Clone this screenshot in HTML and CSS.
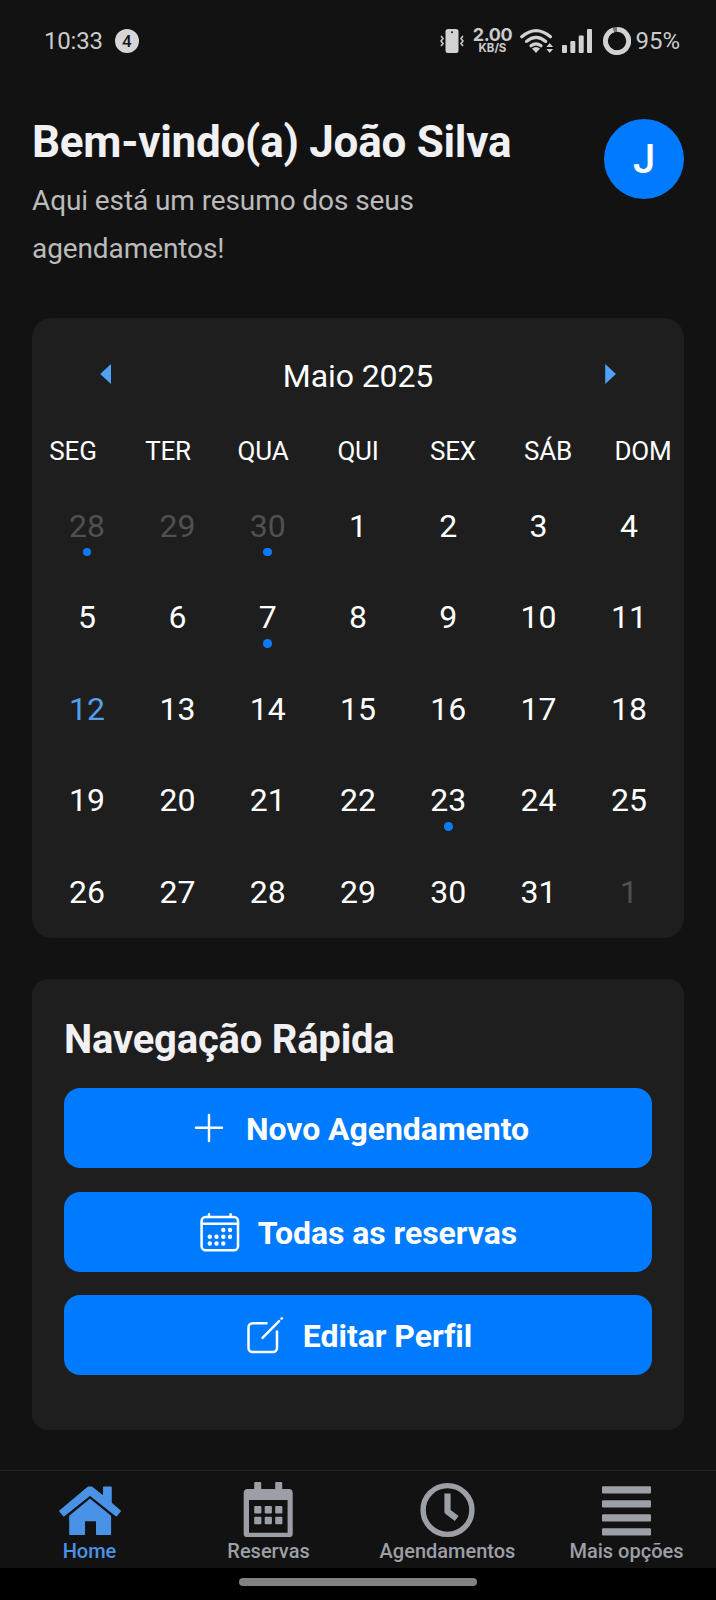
FILE: index.html
```html
<!DOCTYPE html>
<html lang="pt-BR">
<head>
<meta charset="utf-8">
<title>Agendamentos</title>
<link rel="stylesheet" href="styles.css">
</head>
<body>
<div class="status">
  <span class="clock">10:33</span>
  <span class="count">4</span>
  <div class="indicators">
    <svg class="vibrate" width="24" height="26" viewBox="0 0 24 26">
      <rect x="5.500" y="1" width="13" height="24" rx="2.500" fill="#d2d2d2"/>
      <circle cx="12" cy="4.200" r="1" fill="#121212"/>
      <path d="M1 8l2 2.500-2 2.500 2 2.500-2 2.500M23 8l-2 2.500 2 2.500-2 2.500 2 2.500" fill="none" stroke="#c4c4c4" stroke-width="1.700"/>
    </svg>
    <div class="speed"><span class="rate">2.00</span><span class="unit">KB/S</span></div>
    <svg class="wifi" width="34" height="26" viewBox="0 0 34 26">
      <g fill="none" stroke="#d2d2d2" stroke-width="3.200" stroke-linecap="round">
        <path d="M1.800 8.800Q16 -3.500 30.400 8.800"/>
        <path d="M6.500 13.400Q16 5.300 25.700 13.400"/>
        <path d="M11 17.800Q16 13.800 21 17.800"/>
      </g>
      <path d="M12 20.500Q16 17.500 20 20.500L16 25z" fill="#d2d2d2"/>
      <path d="M29.700 15l3.300 4h-6.600zM29.700 25l3.300-4h-6.600z" fill="#d2d2d2"/>
    </svg>
    <svg class="signal" width="30" height="26" viewBox="0 0 30 26" fill="#d2d2d2">
      <rect x="0" y="17" width="5" height="8" rx="1"/>
      <rect x="8.300" y="13" width="5" height="12" rx="1"/>
      <rect x="16.700" y="7.500" width="5" height="17.500" rx="1"/>
      <rect x="25" y="1" width="5" height="24" rx="1"/>
    </svg>
    <svg class="battery" width="28" height="28" viewBox="0 0 28 28" fill="none" stroke-width="4.800">
      <circle cx="14" cy="14" r="11.600" stroke="#777"/>
      <path d="M14 2.400A11.600 11.600 0 1 1 10.400 3" stroke="#d2d2d2"/>
    </svg>
    <span class="percent">95%</span>
  </div>
</div>

<header class="header">
  <div class="greeting">
    <h1>Bem-vindo(a) João Silva</h1>
    <p>Aqui está um resumo dos seus agendamentos!</p>
  </div>
  <div class="avatar">J</div>
</header>

<section class="card calendar">
  <div class="month">
    <svg width="12" height="20" viewBox="0 0 12 20"><path d="M11 0v20L.2 10z" fill="#4fa3f7"/></svg>
    <h2>Maio 2025</h2>
    <svg width="12" height="20" viewBox="0 0 12 20"><path d="M1.200 0v20L12 10z" fill="#4fa3f7"/></svg>
  </div>
  <div class="weekdays"><span>SEG</span><span>TER</span><span>QUA</span><span>QUI</span><span>SEX</span><span>SÁB</span><span>DOM</span></div>
  <div class="days">
    <span class="out mark">28</span><span class="out">29</span><span class="out mark">30</span><span>1</span><span>2</span><span>3</span><span>4</span>
    <span>5</span><span>6</span><span class="mark">7</span><span>8</span><span>9</span><span>10</span><span>11</span>
    <span class="today">12</span><span>13</span><span>14</span><span>15</span><span>16</span><span>17</span><span>18</span>
    <span>19</span><span>20</span><span>21</span><span>22</span><span class="mark">23</span><span>24</span><span>25</span>
    <span>26</span><span>27</span><span>28</span><span>29</span><span>30</span><span>31</span><span class="out">1</span>
  </div>
</section>

<section class="card quick">
  <h2>Navegação Rápida</h2>
  <div class="actions">
    <a class="action">
      <svg width="44" height="44" viewBox="0 0 44 44"><path d="M22 9v26M9 21.800h26" stroke="#fff" stroke-width="2.400" stroke-linecap="round"/></svg>
      <span>Novo Agendamento</span>
    </a>
    <a class="action">
      <svg width="44" height="44" viewBox="0.700 0 44 44">
        <g fill="none" stroke="#fff" stroke-width="2.500" stroke-linecap="round">
          <rect x="3.300" y="7" width="36.400" height="33.200" rx="4"/>
          <path d="M3.300 13.700h36.400M10.700 4.200V6.700M32.300 4.200V6.700"/>
        </g>
        <g fill="#fff">
          <circle cx="25" cy="20" r="2.200"/><circle cx="31.700" cy="20" r="2.200"/>
          <circle cx="11.500" cy="26.800" r="2.200"/><circle cx="18.200" cy="26.800" r="2.200"/><circle cx="25" cy="26.800" r="2.200"/><circle cx="31.700" cy="26.800" r="2.200"/>
          <circle cx="11.500" cy="33.500" r="2.200"/><circle cx="18.200" cy="33.500" r="2.200"/><circle cx="25" cy="33.500" r="2.200"/>
        </g>
      </svg>
      <span>Todas as reservas</span>
    </a>
    <a class="action">
      <svg width="44" height="44" viewBox="0 0 44 44" fill="none" stroke="#fff" stroke-width="2.500" stroke-linecap="round">
        <path d="M22.500 10.300H8.500a4 4 0 0 0-4 4V35a4 4 0 0 0 4 4H29a4 4 0 0 0 4-4V18.500"/>
        <path d="M18.500 24.800L35.100 8.100M37.500 5.700l.4-.4"/>
      </svg>
      <span>Editar Perfil</span>
    </a>
  </div>
</section>

<nav class="tabs">
  <a class="tab active">
    <svg width="64" height="56" viewBox="0 0 64 56" fill="currentColor" stroke="currentColor" stroke-width="1.600" stroke-linejoin="round">
      <path d="M30.500 5.200h3L45.800 15V5.200h7.200V21.200L62.200 29l-4 4.700L32 12.800 5.900 33.700l-4-4.700z"/>
      <path d="M32 17.500L52.300 34v18.200H38.800V38.500H26.200v13.700H12V34z"/>
    </svg>
    <span>Home</span>
  </a>
  <a class="tab">
    <svg width="64" height="56" viewBox="0.800 0 64 56" fill="currentColor">
      <path fill-rule="evenodd" d="M11.500 7H18V1q0-1 1-1h5q1 0 1 1v6h14V1q0-1 1-1h5q1 0 1 1v6h6.500q4 0 4 4v41q0 3-3 3h-43q-3 0-3-3V11q0-4 4-4zM12.800 18v32.700h38.600V18z"/>
      <rect x="18" y="24" width="7.200" height="7.500" rx="1"/><rect x="28.500" y="24" width="7.200" height="7.500" rx="1"/><rect x="39" y="24" width="7.200" height="7.500" rx="1"/>
      <rect x="18" y="34.800" width="7.200" height="7.500" rx="1"/><rect x="28.500" y="34.800" width="7.200" height="7.500" rx="1"/><rect x="39" y="34.800" width="7.200" height="7.500" rx="1"/>
    </svg>
    <span>Reservas</span>
  </a>
  <a class="tab">
    <svg width="64" height="56" viewBox="0.500 0 64 56" fill="none" stroke="currentColor">
      <circle cx="32" cy="28" r="24.400" stroke-width="5.400"/>
      <path d="M32 11.500v18l9.200 7" stroke-width="6.200" stroke-linejoin="round"/>
    </svg>
    <span>Agendamentos</span>
  </a>
  <a class="tab">
    <svg width="64" height="56" viewBox="0.500 0 64 56" fill="currentColor">
      <rect x="7.500" y="4.300" width="49" height="7.200" rx="1.200"/><rect x="7.500" y="18.200" width="49" height="7.200" rx="1.200"/><rect x="7.500" y="32.200" width="49" height="7.200" rx="1.200"/><rect x="7.500" y="46.200" width="49" height="7.200" rx="1.200"/>
    </svg>
    <span>Mais opções</span>
  </a>
</nav>
<div class="gesture"><div class="pill"></div></div>
</body>
</html>
```

FILE: styles.css
```css
* { box-sizing: border-box; }

body {
  margin: 0;
  width: 716px;
  height: 1600px;
  overflow: hidden;
  display: flex;
  flex-direction: column;
  background: #121212;
  color: #fff;
  font-family: Roboto, "Liberation Sans", sans-serif;
}

h1, h2, p { margin: 0; }
svg { display: block; flex: none; }

/* Status bar */
.status {
  height: 82px;
  flex: none;
  display: flex;
  align-items: center;
  padding: 0 36px 0 44px;
  color: #cacaca;
  font-size: 24px;
}
.clock { letter-spacing: -0.2px; }
.count {
  width: 24px;
  height: 24px;
  margin-left: 12px;
  border-radius: 50%;
  background: #d6d6d6;
  color: #161616;
  font-size: 17px;
  font-weight: 500;
  line-height: 24px;
  text-align: center;
}
.indicators { display: flex; align-items: center; margin-left: auto; }
.speed {
  width: 38px;
  margin-left: 9px;
  padding-top: 1px;
  display: flex;
  flex-direction: column;
  align-items: center;
  font-family: Inter, sans-serif;
  font-weight: 700;
}
.rate { font-size: 18px; line-height: 14px; letter-spacing: -0.4px; }
.unit { font-size: 11.5px; line-height: 13px; }
.wifi { margin-left: 9px; }
.signal { margin-left: 8px; }
.battery { margin-left: 11px; }
.percent { margin-left: 4px; }

/* Greeting */
.header {
  height: 202px;
  flex: none;
  margin: 34px 32px 0;
  display: flex;
  justify-content: space-between;
}
.greeting { width: 500px; }
.greeting h1 {
  color: #f1f1f3;
  font-size: 44px;
  font-weight: 700;
  line-height: 52px;
  letter-spacing: -0.27px;
  white-space: nowrap;
}
.greeting p {
  width: 440px;
  margin-top: 9px;
  color: #bbb;
  font-size: 28px;
  line-height: 48px;
  letter-spacing: -0.1px;
}
.avatar {
  width: 80px;
  height: 80px;
  margin-top: 3px;
  border-radius: 50%;
  background: #007bff;
  font-size: 40px;
  font-weight: 500;
  line-height: 81px;
  text-align: center;
}

/* Cards */
.card {
  flex: none;
  margin: 0 32px;
  background: #1e1e1e;
}
.calendar {
  height: 620px;
  padding-top: 38px;
  border-radius: 20px;
}
.month {
  height: 40px;
  padding: 0 68px;
  display: flex;
  align-items: center;
  justify-content: space-between;
}
.month svg { margin-bottom: 4px; }
.month h2 { font-size: 32px; font-weight: 400; line-height: 40px; letter-spacing: -0.1px; }
.weekdays {
  display: grid;
  grid-template-columns: repeat(7, 95px);
  justify-content: center;
  margin-top: 39px;
  font-size: 26px;
  line-height: 32px;
  letter-spacing: -0.2px;
  text-align: center;
}
.days {
  display: grid;
  grid-template-columns: repeat(7, 90.3px);
  grid-auto-rows: 91.5px;
  justify-content: center;
  margin-top: 13.5px;
  font-size: 32px;
  line-height: 91px;
  text-align: center;
}
.days .out { color: #505050; }
.days .today { color: #559fec; }
.mark { position: relative; }
.mark::after {
  content: "";
  position: absolute;
  top: 67px;
  left: 50%;
  width: 8.5px;
  height: 8.5px;
  margin-left: -4.25px;
  border-radius: 50%;
  background: #0d7af5;
}

.quick {
  height: 451px;
  margin-top: 41px;
  padding: 36px 32px 0;
  border-radius: 16px;
}
.quick h2 {
  color: #f1f1f3;
  font-size: 40px;
  font-weight: 700;
  line-height: 49px;
  letter-spacing: -0.22px;
}
.actions {
  display: flex;
  flex-direction: column;
  gap: 23.5px;
  margin-top: 24px;
}
.action {
  height: 80px;
  display: flex;
  align-items: center;
  justify-content: center;
  gap: 15px;
  border-radius: 16px;
  background: #007bff;
  font-size: 32px;
  font-weight: 700;
}
.action span { padding-top: 2px; letter-spacing: -0.05px; }

/* Bottom navigation */
.tabs {
  height: 98px;
  flex: none;
  margin-top: 40px;
  padding-top: 11px;
  display: grid;
  grid-template-columns: repeat(4, 1fr);
  border-top: 1px solid #222;
}
.tab {
  display: flex;
  flex-direction: column;
  align-items: center;
  color: #9ca0a6;
  font-size: 20px;
  font-weight: 500;
  line-height: 26px;
}
.tab.active { color: #4a92e6; }

.gesture {
  flex: 1;
  padding-top: 10px;
  background: #000;
}
.pill {
  width: 238px;
  height: 8px;
  margin: 0 auto;
  border-radius: 4px;
  background: #828282;
}
```
